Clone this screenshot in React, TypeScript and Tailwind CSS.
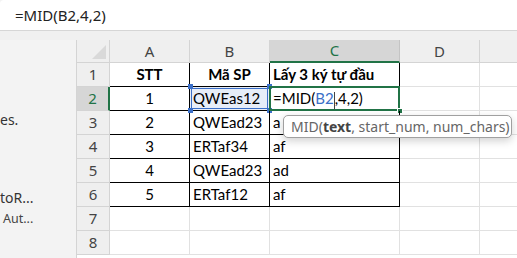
import React from 'react';

const cellFont = { fontFamily: 'Lato, "Liberation Sans", sans-serif' };
const uiFont = { fontFamily: '"Noto Sans", "Open Sans", sans-serif' };

const rows = [
  ['1', 'QWEas12', ''],
  ['2', 'QWEad23', 'a'],
  ['3', 'ERTaf34', 'af'],
  ['4', 'QWEad23', 'ad'],
  ['5', 'ERTaf12', 'af'],
];

function Handle({ className }: { className: string }) {
  return <span className={`absolute w-[5px] h-[5px] bg-[#3b6fc8] ${className}`} />;
}

export default function App() {
  return (
    <div className="w-[517px] h-[258px] overflow-hidden bg-[#f3f3f3] relative" style={uiFont}>
      {/* formula bar */}
      <div className="h-[31px] bg-white border-b border-[#d6d6d6] rounded-tl-[4px] flex items-center pl-[15px] text-[15px] text-[#222]">
        =MID(B2,4,2)
      </div>
      <div className="h-[9px] bg-[#f0f0f0]" />

      <div className="flex">
        {/* left side panel */}
        <div className="w-[77px] h-[218px] bg-[#f3f3f3] border-r border-[#d4d4d4] relative text-[#333]">
          <div className="absolute left-0 top-[73px] text-[14px] leading-none">es.</div>
          <div className="absolute left-0 top-[151px] text-[14px] leading-none">toR...</div>
          <div className="absolute left-[3px] top-[173px] text-[12.5px] leading-none text-[#444]">Aut...</div>
        </div>

        {/* sheet */}
        <div className="flex-1 bg-white">
          <div className="grid grid-cols-[33px_80px_80px_130px_80px_1fr] grid-rows-[23px_24px_24px_24px_24px_24px_24px_24px_24px]">
            {/* header row */}
            <div className="bg-[#efefef] border-r border-b border-[#d4d4d4] relative">
              <svg className="absolute right-[3px] bottom-[3px]" width="14" height="14" viewBox="0 0 14 14">
                <polygon points="14,0 14,14 0,14" fill="#d9d9d9" />
              </svg>
            </div>
            {['A', 'B'].map((h) => (
              <div key={h} className="bg-[#efefef] border-r border-b border-[#d4d4d4] flex items-center justify-center text-[15px] text-[#444]">
                {h}
              </div>
            ))}
            <div className="bg-[#d6d6d6] border-r border-[#c4c4c4] border-b-2 border-b-[#217346] flex items-center justify-center text-[15px] text-[#217346]">
              C
            </div>
            <div className="bg-[#efefef] border-r border-b border-[#d4d4d4] flex items-center justify-center text-[15px] text-[#444]">
              D
            </div>
            <div className="bg-[#efefef] border-b border-[#d4d4d4]" />

            {/* row 1 */}
            <div className="bg-[#efefef] border-r border-b border-[#d4d4d4] flex items-center justify-center text-[15px] text-[#444]">1</div>
            <div className="border-r border-b border-black flex items-center justify-center font-bold text-[15px] text-black" style={cellFont}>STT</div>
            <div className="border-r border-b border-black flex items-center justify-center font-bold text-[15px] text-black" style={cellFont}>Mã SP</div>
            <div className="border-r border-b border-black flex items-center pl-[3px] font-bold text-[15px] text-black" style={cellFont}>Lấy 3 ký tự đầu</div>
            <div className="border-r border-b border-[#e1e1e1]" />
            <div className="border-b border-[#e1e1e1]" />

            {rows.map((r, i) => {
              const active = i === 0;
              return (
                <React.Fragment key={i}>
                  <div
                    className={`border-b border-[#d4d4d4] flex items-center justify-center text-[15px] ${
                      active ? 'bg-[#d6d6d6] text-[#217346] border-r-2 border-r-[#217346]' : 'bg-[#efefef] text-[#444] border-r'
                    }`}
                  >
                    {i + 2}
                  </div>
                  <div className="border-r border-b border-black flex items-center justify-center text-[15px] text-black" style={cellFont}>
                    {r[0]}
                  </div>
                  <div
                    className={`border-r border-b border-black flex items-center pl-[3px] text-[15px] text-black relative ${active ? 'bg-[#e6edf8]' : ''}`}
                    style={cellFont}
                  >
                    {active && (
                      <>
                        <span className="absolute inset-[1px] border border-[#3b6fc8]" />
                        <Handle className="left-[-2px] top-[-3px]" />
                        <Handle className="right-[-3px] top-[-3px]" />
                        <Handle className="left-[-2px] bottom-[-3px]" />
                        <Handle className="right-[-3px] bottom-[-3px]" />
                      </>
                    )}
                    <span className="relative">{r[1]}</span>
                  </div>
                  <div className="border-r border-b border-black flex items-center pl-[3px] text-[15px] text-black relative" style={cellFont}>
                    {active ? (
                      <>
                        <span className="absolute inset-[-1px] border-2 border-[#217346]" />
                        <span className="absolute right-[-4px] bottom-[-4px] w-[6px] h-[6px] bg-[#217346] border border-white" />
                        <span className="relative">
                          =MID(<span className="text-[#3b6fc8]">B2</span>
                          <span className="inline-block w-px h-[17px] bg-[#444] align-middle" />,4,2)
                        </span>
                      </>
                    ) : (
                      r[2]
                    )}
                  </div>
                  <div className="border-r border-b border-[#e1e1e1]" />
                  <div className="border-b border-[#e1e1e1]" />
                </React.Fragment>
              );
            })}

            {[7, 8].map((n) => (
              <React.Fragment key={n}>
                <div className="bg-[#efefef] border-r border-b border-[#d4d4d4] flex items-center justify-center text-[15px] text-[#444]">{n}</div>
                <div className="border-r border-b border-[#e1e1e1]" />
                <div className="border-r border-b border-[#e1e1e1]" />
                <div className="border-r border-b border-[#e1e1e1]" />
                <div className="border-r border-b border-[#e1e1e1]" />
                <div className="border-b border-[#e1e1e1]" />
              </React.Fragment>
            ))}
          </div>
        </div>
      </div>

      {/* function tooltip */}
      <div className="absolute left-[283px] top-[115px] w-[229px] h-[23px] bg-white border border-[#a0a0a0] rounded-[5px] shadow-[0_3px_8px_rgba(0,0,0,0.18)] flex items-center pl-[7px] text-[14px] text-[#666] whitespace-nowrap">
        MID(<span className="font-bold text-[#444]">text</span>, start_num, num_chars)
      </div>
    </div>
  );
}
